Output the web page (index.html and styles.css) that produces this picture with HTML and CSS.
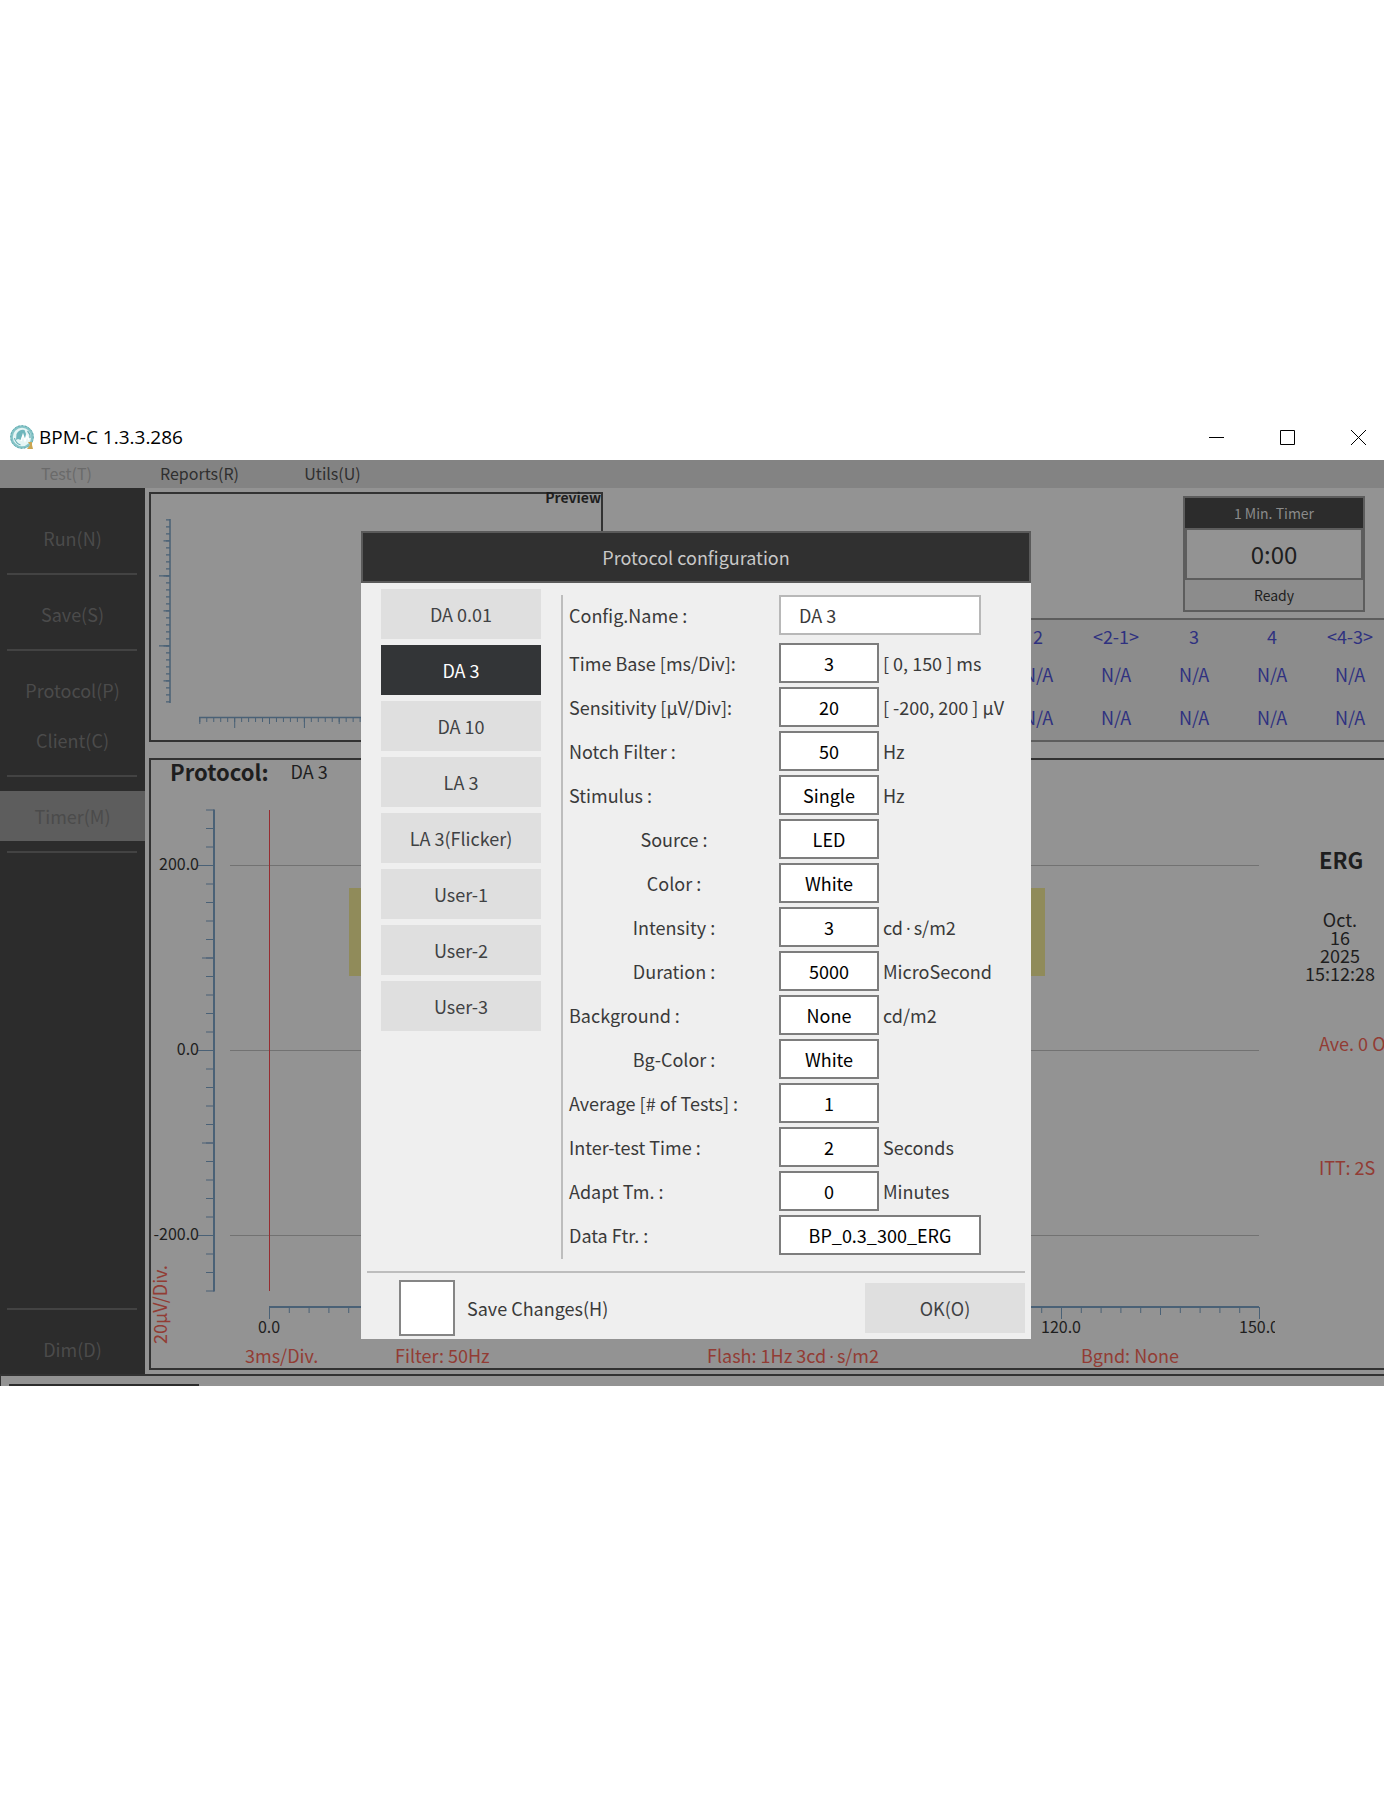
FILE: index.html
```html
<!DOCTYPE html>
<html lang="en">
<head>
<meta charset="utf-8">
<title>BPM-C 1.3.3.286</title>
<link rel="stylesheet" href="styles.css">
</head>
<body>
<div class="window">
  <header class="titlebar">
    <svg class="logo" viewBox="0 0 24 24" aria-hidden="true">
      <circle cx="12" cy="12" r="10.5" fill="#e6f5f5" stroke="#86c4c7" stroke-width="2.600"/>
      <circle cx="12" cy="12" r="11.300" fill="none" stroke="#4f9da5" stroke-width=".8" stroke-dasharray="1.500 2"/>
      <path d="M6.500 9q3-5 8-4l1.500 4-1 4-3-1-1 3-3-1-2 1z" fill="#6fb6bc"/>
      <path d="M11 16l2-6 2 6 2-5 2 4" fill="none" stroke="#fff" stroke-width="1.400"/>
      <path d="M17.500 6q3 3 2.500 7M4.500 13q1 5 6 7" fill="none" stroke="#69b0b6" stroke-width="1.200"/>
      <path d="M18 17h4v3l1 4h-6l3-4z" fill="#c9a552"/>
    </svg>
    <h1 class="titlebar-name">BPM-C 1.3.3.286</h1>
    <div class="window-buttons">
      <button class="window-button" aria-label="Minimize"><svg viewBox="0 0 15 15"><path d="M0 7.500h15"/></svg></button>
      <button class="window-button" aria-label="Maximize"><svg viewBox="0 0 15 15"><path d="M.5.5h14v14H.5z"/></svg></button>
      <button class="window-button" aria-label="Close"><svg viewBox="0 0 15 15"><path d="M0 0l15 15M15 0L0 15"/></svg></button>
    </div>
  </header>

  <div class="app">
    <nav class="menubar">
      <button class="menu-item menu-item-off">Test(T)</button>
      <button class="menu-item">Reports(R)</button>
      <button class="menu-item">Utils(U)</button>
    </nav>

    <div class="workspace">
      <nav class="sidebar">
        <button class="side-item">Run(N)</button>
        <hr class="side-rule">
        <button class="side-item">Save(S)</button>
        <hr class="side-rule">
        <button class="side-item">Protocol(P)</button>
        <button class="side-item">Client(C)</button>
        <hr class="side-rule">
        <button class="side-item side-item-active">Timer(M)</button>
        <hr class="side-rule">
        <hr class="side-rule side-rule-last">
        <button class="side-item">Dim(D)</button>
      </nav>

      <main class="main">
        <div class="upper">
          <section class="preview">
            <h2 class="preview-title">Preview</h2>
            <svg class="preview-plot" viewBox="0 0 450 246" aria-hidden="true">
              <g class="axis">
                <path d="M19 25v184M48 223.500h350" stroke-width="1.500"/>
                <path d="M17 25.200v184" stroke-width="4" stroke-dasharray="1.200 5.800"/>
                <path d="M15.500 46.200v148" stroke-width="6" stroke-dasharray="1.200 33.800"/>
                <path d="M13 81.200v72" stroke-width="10" stroke-dasharray="1.200 68.800"/>
                <path d="M48.300 226h350" stroke-width="4" stroke-dasharray="1 5.970"/>
                <path d="M48.300 227h350" stroke-width="6" stroke-dasharray="1 68.700"/>
                <path d="M83.200 229h315" stroke-width="10" stroke-dasharray="1 68.700"/>
              </g>
            </svg>
          </section>
          <div class="readout">
            <section class="timer">
              <h2 class="timer-title">1 Min. Timer</h2>
              <output class="timer-value">0:00</output>
              <p class="timer-state">Ready</p>
            </section>
            <div class="results">
              <table class="results-table">
                <thead><tr><th>2</th><th>&lt;2-1&gt;</th><th>3</th><th>4</th><th>&lt;4-3&gt;</th></tr></thead>
                <tbody>
                  <tr><td>N/A</td><td>N/A</td><td>N/A</td><td>N/A</td><td>N/A</td></tr>
                  <tr><td>N/A</td><td>N/A</td><td>N/A</td><td>N/A</td><td>N/A</td></tr>
                </tbody>
              </table>
            </div>
          </div>
        </div>

        <section class="chart">
          <div class="chart-main">
            <h2 class="chart-title"><strong class="chart-label">Protocol:</strong> <span>DA 3</span></h2>
            <svg class="plot" viewBox="0 0 1124 556" role="img" aria-label="ERG trace">
              <rect x="198" y="98" width="696" height="88" fill="#908b5a"/>
              <path class="grid" d="M79 75.500h1029M79 260.500h1029M79 445.500h1029"/>
              <path class="cursor" d="M118.500 20v481"/>
              <g class="axis">
                <path d="M63 19.500v482M118 517h990" stroke-width="2"/>
                <path d="M59 19.500v482" stroke-width="8" stroke-dasharray="1 17.500"/>
                <path d="M57 167.500v186" stroke-width="12" stroke-dasharray="1 184"/>
                <path d="M55 75v371" stroke-width="17" stroke-dasharray="1 184"/>
                <path d="M118 520h991" stroke-width="6" stroke-dasharray="1 18.800"/>
                <path d="M217 521h991" stroke-width="8" stroke-dasharray="1 197"/>
                <path d="M118 523h991" stroke-width="12" stroke-dasharray="1 197"/>
              </g>
              <g class="tick-text" text-anchor="end">
                <text x="48" y="80">200.0</text>
                <text x="48" y="265">0.0</text>
                <text x="48" y="450">-200.0</text>
              </g>
              <g class="tick-text" text-anchor="middle">
                <text x="118" y="543">0.0</text>
                <text x="910" y="543">120.0</text>
                <text x="1108" y="543">150.0</text>
              </g>
              <text class="scale-text" transform="translate(16 554) rotate(-90)">20μV/Div.</text>
            </svg>
          </div>
          <aside class="trace-info">
            <h3 class="trace-name">ERG</h3>
            <p class="trace-date">Oct.<br>16<br>2025<br>15:12:28</p>
            <p class="trace-note trace-average">Ave. 0 Of 1</p>
            <p class="trace-note">ITT: 2S</p>
          </aside>
          <div class="chart-footer">
            <span>3ms/Div.</span><span>Filter: 50Hz</span><span>Flash: 1Hz 3cd<i class="dot">·</i>s/m2</span><span>Bgnd: None</span>
          </div>
        </section>
      </main>
    </div>

    <footer class="statusbar"><div class="status-cell"></div></footer>

    <div class="backdrop">
      <form class="dialog" role="dialog" aria-labelledby="dialog-title">
        <h2 class="dialog-title" id="dialog-title">Protocol configuration</h2>
        <div class="dialog-body">
          <div class="protocols">
            <button type="button" class="button">DA 0.01</button>
            <button type="button" class="button button-selected">DA 3</button>
            <button type="button" class="button">DA 10</button>
            <button type="button" class="button">LA 3</button>
            <button type="button" class="button">LA 3(Flicker)</button>
            <button type="button" class="button">User-1</button>
            <button type="button" class="button">User-2</button>
            <button type="button" class="button">User-3</button>
          </div>
          <div class="fields">
            <div class="field field-name"><label for="name">Config.Name :</label><input id="name" class="box box-wide box-name" value="DA 3"></div>
            <div class="field"><label for="base">Time Base [ms/Div]:</label><input id="base" class="box" value="3"><span>[ 0, 150 ] ms</span></div>
            <div class="field"><label for="sens">Sensitivity [μV/Div]:</label><input id="sens" class="box" value="20"><span>[ -200, 200 ] μV</span></div>
            <div class="field"><label for="notch">Notch Filter :</label><input id="notch" class="box" value="50"><span>Hz</span></div>
            <div class="field"><label for="stim">Stimulus :</label><input id="stim" class="box" value="Single"><span>Hz</span></div>
            <div class="field field-sub"><label for="source">Source :</label><input id="source" class="box" value="LED"></div>
            <div class="field field-sub"><label for="color">Color :</label><input id="color" class="box" value="White"></div>
            <div class="field field-sub"><label for="intensity">Intensity :</label><input id="intensity" class="box" value="3"><span>cd<i class="dot">·</i>s/m2</span></div>
            <div class="field field-sub"><label for="duration">Duration :</label><input id="duration" class="box" value="5000"><span>MicroSecond</span></div>
            <div class="field"><label for="background">Background :</label><input id="background" class="box" value="None"><span>cd/m2</span></div>
            <div class="field field-sub"><label for="bgcolor">Bg-Color :</label><input id="bgcolor" class="box" value="White"></div>
            <div class="field"><label for="average">Average [# of Tests] :</label><input id="average" class="box" value="1"></div>
            <div class="field"><label for="inter">Inter-test Time :</label><input id="inter" class="box" value="2"><span>Seconds</span></div>
            <div class="field"><label for="adapt">Adapt Tm. :</label><input id="adapt" class="box" value="0"><span>Minutes</span></div>
            <div class="field"><label for="filter">Data Ftr. :</label><input id="filter" class="box box-wide" value="BP_0.3_300_ERG"></div>
          </div>
        </div>
        <div class="dialog-footer">
          <label class="save"><input type="checkbox" class="save-box">Save Changes(H)</label>
          <button type="button" class="button">OK(O)</button>
        </div>
      </form>
    </div>
  </div>
</div>
</body>
</html>
```
FILE: styles.css
```css
* {
  box-sizing: border-box;
}

body {
  margin: 0;
  background: #fff;
  color: #1e1e1e;
  font: 18px/26px "Noto Sans CJK SC", "Noto Sans", sans-serif;
}

h1, h2, h3, p, hr {
  margin: 0;
}

button, input {
  margin: 0;
  padding: 0;
  border: 0;
  font: inherit;
  color: inherit;
}

.window {
  padding-top: 414px;
  overflow: hidden;
}

/* Title bar */
.titlebar {
  display: flex;
  align-items: center;
  height: 46px;
  padding-left: 10px;
}

.logo {
  width: 24px;
  height: 24px;
  margin-right: 5px;
}

.titlebar-name {
  flex: 1;
  color: #000;
  font: 19px/28px "Open Sans", sans-serif;
}

.window-buttons {
  display: flex;
  gap: 20px;
}

.window-button {
  display: grid;
  place-items: center;
  width: 51px;
  height: 46px;
  background: none;
}

.window-button svg {
  width: 15px;
  height: 15px;
  fill: none;
  stroke: #000;
}

/* Menu bar */
.app {
  position: relative;
  background: #939393;
}

.menubar {
  display: flex;
  height: 28px;
  background: #838383;
}

.menu-item {
  width: 133px;
  padding-bottom: 2px;
  background: none;
  font-size: 16px;
  color: #2f2f2f;
}

.menu-item-off {
  color: #6a6a6a;
}

.workspace {
  display: flex;
}

/* Sidebar */
.sidebar {
  display: flex;
  flex-direction: column;
  flex: none;
  width: 145px;
  padding-top: 25px;
  background: #2c2c2c;
}

.side-item {
  height: 50px;
  background: none;
  color: #4b4b4b;
}

.side-item-active {
  background: #5d5d5d;
}

.side-rule {
  height: 2px;
  margin: 10px 8px 14px 7px;
  border: 0;
  background: #434343;
}

.side-rule-last {
  margin-top: auto;
}

/* Upper row */
.main {
  flex: 1;
  min-width: 0;
  padding: 4px 0 4px 4px;
}

.upper {
  display: flex;
  justify-content: space-between;
  height: 250px;
}

.preview {
  position: relative;
  width: 454px;
  border: 2px solid #323232;
}

.preview-title {
  position: absolute;
  top: -9px;
  right: 0;
  font-size: 14px;
  line-height: 24px;
}

.preview-plot {
  display: block;
}

.axis {
  fill: none;
  stroke: #4a6176;
}

.readout {
  display: flex;
  flex: 1;
  flex-direction: column;
  min-width: 0;
  padding-top: 4px;
}

.timer {
  align-self: flex-end;
  width: 182px;
  margin: 0 19px 6px 0;
  border: 2px solid #5d5d5d;
  background: #8c8c8c;
  text-align: center;
}

.timer-title {
  background: #2c2c2c;
  color: #8a8a8a;
  font-size: 14px;
  font-weight: 400;
  line-height: 30px;
}

.timer-value {
  display: block;
  border: 2px solid #5d5d5d;
  background: #939393;
  font-size: 24px;
  line-height: 48px;
}

.timer-state {
  font-size: 14px;
  line-height: 30px;
}

.results {
  display: flex;
  justify-content: flex-end;
  height: 124px;
  border: solid #5d5d5d;
  border-width: 2px 0;
  background: #8c8c8c;
  overflow: hidden;
}

.results-table {
  flex: none;
  width: 390px;
  height: 118px;
  margin-right: -5px;
  border-collapse: collapse;
  table-layout: fixed;
  color: #2f3180;
  text-align: center;
}

.results-table th {
  height: 32px;
  padding: 0;
  font-weight: 400;
}

.results-table td {
  height: 43px;
  padding: 0;
}

/* Chart */
.chart {
  display: grid;
  grid-template-columns: minmax(0, 1fr) 109px;
  margin-top: 16px;
  border: solid #323232;
  border-width: 2px 0 2px 2px;
  overflow: hidden;
}

.chart-title {
  display: flex;
  align-items: center;
  gap: 22px;
  height: 30px;
  padding: 0 0 8px 19px;
  font-size: 18px;
  font-weight: 400;
}

.chart-label {
  font-size: 22px;
}

.plot {
  display: block;
  width: 100%;
}

.grid {
  stroke: #727272;
}

.cursor {
  stroke: #962c30;
}

.tick-text {
  fill: #1e1e1e;
  font-size: 16px;
}

.scale-text {
  fill: #923c34;
}

.trace-info {
  padding: 86px 0 0 44px;
  white-space: nowrap;
}

.trace-name {
  font-size: 22px;
}

.trace-date {
  width: 70px;
  margin: 38px 0 48px -14px;
  line-height: 18px;
  text-align: center;
}

.trace-note {
  color: #923c34;
}

.trace-average {
  margin-bottom: 98px;
}

.chart-footer {
  display: grid;
  grid-column: 1 / -1;
  grid-template-columns: 150fr 312fr 374fr 303fr;
  height: 22px;
  padding-left: 94px;
  color: #923c34;
  line-height: 18px;
}

.dot {
  padding: 0 3px;
  font-family: "Open Sans", sans-serif;
  font-style: normal;
  line-height: 1;
}

/* Status bar */
.statusbar {
  height: 12px;
  padding: 8px 0 0 8px;
  border: solid #323232;
  border-width: 2px 0 0 1px;
}

.status-cell {
  width: 190px;
  height: 2px;
  background: #2c2c2c;
}

/* Dialog */
.backdrop {
  position: absolute;
  inset: 0;
  display: flex;
  justify-content: center;
  align-items: flex-start;
  padding: 71px 0 0 8px;
}

.dialog {
  width: 670px;
  background: #efefef;
  color: #3a3a3a;
}

.dialog-title {
  border: 2px solid #5a5a5a;
  background: #303030;
  color: #c8c8c8;
  font-size: 18px;
  font-weight: 400;
  line-height: 48px;
  text-align: center;
}

.dialog-body {
  display: flex;
  gap: 20px;
  margin: 0 6px;
  padding: 6px 0 12px 14px;
  border-bottom: 2px solid #bdbdbd;
}

.protocols {
  display: flex;
  flex-direction: column;
  gap: 6px;
}

.button {
  width: 160px;
  height: 50px;
  background: #dfdfdf;
  color: #3f4244;
}

.button-selected {
  background: #333537;
  color: #fff;
}

.fields {
  display: grid;
  flex: 1;
  gap: 4px;
  margin-top: 6px;
  padding: 0 0 4px 6px;
  border-left: 2px solid #bdbdbd;
}

.field {
  display: grid;
  grid-template-columns: 210px 100px 1fr;
  align-items: center;
  height: 40px;
}

.field span {
  padding-left: 4px;
  white-space: nowrap;
}

.field-name {
  margin-bottom: 4px;
}

.field-sub label {
  text-align: center;
}

.box {
  width: 100px;
  height: 40px;
  border: 2px solid #7d7d7d;
  background: #fff;
  color: #000;
  text-align: center;
}

.box-wide {
  width: 202px;
}

.box-name {
  padding-left: 18px;
  border-color: #b8b8b8;
  color: #3a3a3a;
  text-align: left;
}

.dialog-footer {
  display: flex;
  justify-content: space-between;
  align-items: center;
  height: 66px;
  padding: 6px 6px 2px 38px;
}

.save {
  display: flex;
  align-items: center;
  gap: 12px;
}

.save-box {
  appearance: none;
  width: 56px;
  height: 56px;
  border: 2px solid #858585;
  background: #fff;
}
```
